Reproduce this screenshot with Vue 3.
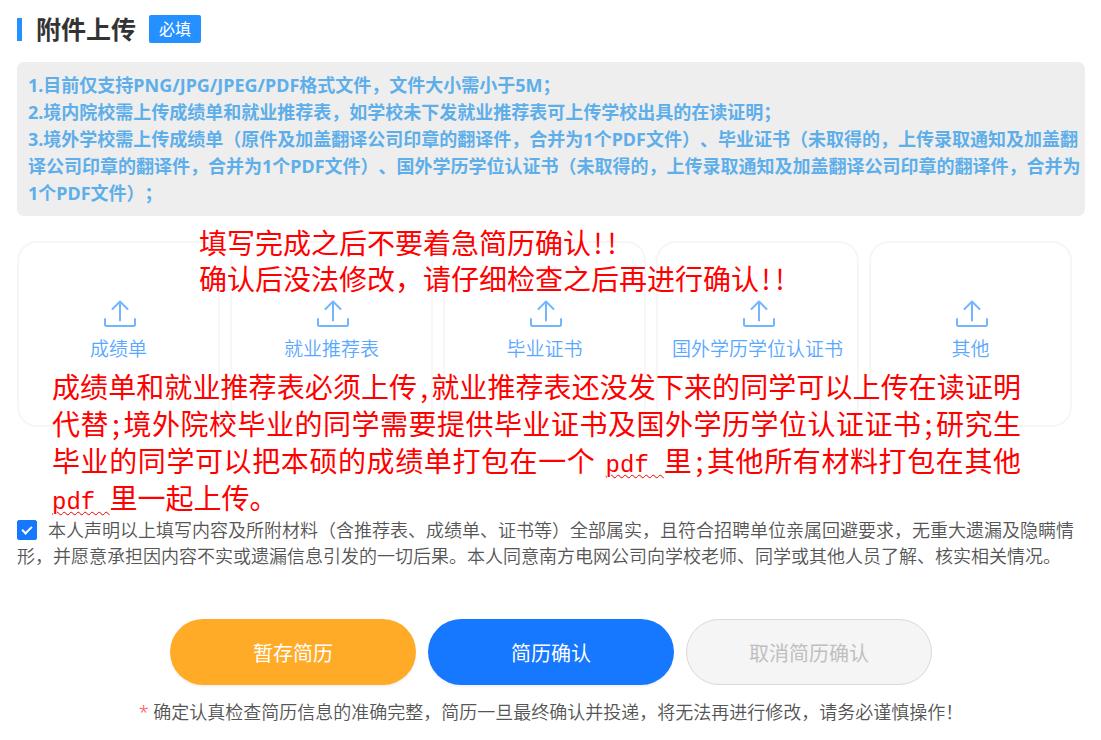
<script setup>
import { ref } from 'vue'

const agreed = ref(true)
const notices = [
  ['1.目前仅支持PNG/JPG/JPEG/PDF格式文件，文件大小需小于5M；'],
  ['2.境内院校需上传成绩单和就业推荐表，如学校未下发就业推荐表可上传学校出具的在读证明；'],
  [
    '3.境外学校需上传成绩单（原件及加盖翻译公司印章的翻译件，合并为1个PDF文件）、毕业证书（未取得的，上传录取通知及加盖翻',
    '译公司印章的翻译件，合并为1个PDF文件）、国外学历学位认证书（未取得的，上传录取通知及加盖翻译公司印章的翻译件，合并为',
    '1个PDF文件）；',
  ],
]
const uploads = ['成绩单', '就业推荐表', '毕业证书', '国外学历学位认证书', '其他']
</script>

<template>
  <main class="page">
    <header class="head">
      <h1>附件上传</h1>
      <span class="tag">必填</span>
    </header>

    <section class="notice">
      <p v-for="(lines, i) in notices" :key="i">
        <span v-for="line in lines" :key="line">{{ line }}</span>
      </p>
    </section>

    <section class="uploads">
      <div class="cards">
        <button v-for="name in uploads" :key="name" type="button" class="card">
          <svg viewBox="0 0 32 28" width="32" height="28" aria-hidden="true">
            <path d="M17 20.500V2M9.500 9L17 1.500L24.500 9M2 19V24.500Q2 26 3.500 26H30.500Q32 26 32 24.500V19" />
          </svg>
          <span>{{ name }}</span>
        </button>
      </div>
      <div class="remark remark-top">
        <p>填写完成之后不要着急简历确认!!</p>
        <p>确认后没法修改，请仔细检查之后再进行确认!!</p>
      </div>
      <p class="remark remark-main">成绩单和就业推荐表必须上传,就业推荐表还没发下来的同学可以上传在读证明代替;境外院校毕业的同学需要提供毕业证书及国外学历学位认证证书;研究生毕业的同学可以把本硕的成绩单打包在一个<span class="spell-gap">&nbsp;</span><span class="spell">pdf </span>里;其他所有材料打包在其他 <span class="spell">pdf </span>里一起上传。</p>
    </section>

    <div class="declare">
      <input id="agree" v-model="agreed" type="checkbox">
      <label for="agree">本人声明以上填写内容及所附材料（含推荐表、成绩单、证书等）全部属实，且符合招聘单位亲属回避要求，无重大遗漏及隐瞒情<br>形，并愿意承担因内容不实或遗漏信息引发的一切后果。本人同意南方电网公司向学校老师、同学或其他人员了解、核实相关情况。</label>
    </div>

    <div class="actions">
      <button type="button" class="save">暂存简历</button>
      <button type="button" class="confirm">简历确认</button>
      <button type="button" class="cancel" disabled>取消简历确认</button>
    </div>
    <p class="tip"><span class="star">*</span> 确定认真检查简历信息的准确完整，简历一旦最终确认并投递，将无法再进行修改，请务必谨慎操作！</p>
  </main>
</template>

<style>
body {
  background: #fff;
}
</style>

<style scoped>
.page {
  padding: 15px 16px 12px 17px;
  font-family: "Noto Sans", "Noto Sans CJK SC", sans-serif;
  font-size: 18px;
  color: #555;
  text-spacing-trim: space-all;
}
p, h1 {
  margin: 0;
}
button {
  font-family: inherit;
  padding: 0;
  cursor: pointer;
}
.head {
  display: flex;
  align-items: center;
  height: 28px;
}
.head::before {
  content: "";
  width: 5px;
  height: 23px;
  margin-right: 14px;
  background: #2590ff;
}
h1 {
  font-size: 25px;
  line-height: 28px;
  font-weight: 700;
  color: #333;
}
.tag {
  margin-left: 13px;
  padding: 0 10px;
  border-radius: 2px;
  background: #2590ff;
  color: #fff;
  font-size: 16px;
  line-height: 28px;
}
.notice {
  margin-top: 19px;
  padding: 10px 0 9px 11px;
  border-radius: 7px;
  background: #eee;
  color: #5eaeea;
  font-weight: 700;
  line-height: 27px;
}
.notice span {
  display: block;
  white-space: nowrap;
}
.uploads {
  position: relative;
  margin-top: 25px;
  height: 276px;
}
.cards {
  display: grid;
  grid-template-columns: repeat(5, 1fr);
  gap: 10px;
  margin-right: 13px;
}
.card {
  display: flex;
  flex-direction: column;
  align-items: center;
  height: 186px;
  padding-top: 57px;
  border: 2px solid #f6f6f6;
  border-radius: 20px;
  background: #fff;
  color: #59a8ff;
  font-size: 19px;
  font-weight: 350;
  line-height: 28px;
}
.card span {
  margin-top: 7px;
}
.card svg {
  flex: none;
  overflow: visible;
  fill: none;
  stroke: #73b5ff;
  stroke-width: 2;
  stroke-linecap: round;
  stroke-linejoin: round;
}
.remark {
  position: absolute;
  color: #f00;
  font-family: "Noto Sans Mono CJK SC", "Noto Sans CJK SC", monospace;
  font-size: 28px;
  font-weight: 400;
  pointer-events: none;
}
.remark-top {
  left: 182px;
  top: -17px;
  line-height: 36px;
  white-space: nowrap;
}
.remark-main {
  left: 35px;
  right: 64px;
  top: 127px;
  line-height: 37px;
  text-align: justify;
}
.spell,
.spell-gap {
  font-family: "Liberation Mono", monospace;
  font-size: 24px;
  line-height: 0;
}
.spell-gap {
  font-size: 16px;
}
.spell {
  text-decoration: underline wavy #e00 1px;
  text-underline-offset: 2px;
}
.declare {
  line-height: 26px;
  font-weight: 350;
  white-space: nowrap;
}
.declare input {
  appearance: none;
  display: inline-grid;
  place-items: center;
  box-sizing: border-box;
  width: 20px;
  height: 20px;
  margin: 3px 11px 0 0;
  vertical-align: top;
  border: 1px solid #1677ff;
  border-radius: 2px;
  background: #fff;
}
.declare input:checked {
  background: #1677ff;
}
.declare input:checked::before {
  content: "";
  width: 4px;
  height: 8px;
  margin-bottom: 3px;
  border: solid #fff;
  border-width: 0 2px 2px 0;
  transform: rotate(45deg);
}
.actions {
  display: flex;
  justify-content: center;
  gap: 12px;
  margin-top: 50px;
}
.actions button {
  width: 246px;
  height: 66px;
  border: 0;
  border-radius: 33px;
  color: #fff;
  font-size: 20px;
  font-weight: 400;
  box-shadow: 0 2px 2px rgba(0, 0, 0, 0.05);
}
.actions .save {
  background: #ffab27;
}
.actions .confirm {
  background: #1677ff;
}
.actions .cancel {
  border: 1px solid #d9d9d9;
  background: #f5f5f5;
  color: #bfbfbf;
  box-shadow: none;
  cursor: not-allowed;
}
.tip {
  margin-top: 14px;
  line-height: 26px;
  font-weight: 350;
  text-align: center;
  white-space: nowrap;
}
.star {
  color: #ff4d4f;
}
</style>
